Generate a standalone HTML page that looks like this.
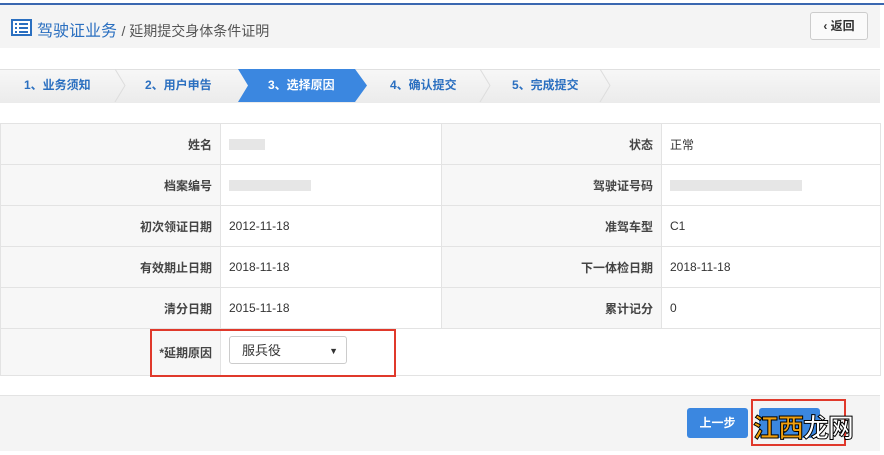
<!DOCTYPE html>
<html><head><meta charset="utf-8"><style>
body{margin:0;width:884px;height:455px;background:#fff;font-family:"Liberation Sans","Noto Sans CJK SC",sans-serif;font-size:12px;color:#333;position:relative;overflow:hidden}
.abs{position:absolute}
table{border-collapse:collapse;position:absolute;left:0;top:123px;width:881px}
td{border:1px solid #e3e3e3;height:40px;padding:0 8px}
td.l{background:#f7f7f7;text-align:right;width:203px;font-weight:bold;color:#444}
td.v{width:204px}
.blur{display:inline-block;height:11px;background:#e6e6e6;vertical-align:middle}
.step{position:absolute;top:69px;height:33px;line-height:33px;color:#2a6fc0;font-weight:bold;font-size:12px}
</style></head><body>
<div class="abs" style="left:0;top:3px;width:884px;height:2px;background:#3a67b0"></div>
<div class="abs" style="left:0;top:5px;width:880px;height:43px;background:#f4f4f4"></div>
<svg class="abs" style="left:11px;top:19px" width="21" height="17"><rect x="1" y="1" width="19" height="15" fill="#fff" stroke="#2a6fc0" stroke-width="2"/><rect x="4" y="4" width="2" height="2" fill="#2a6fc0"/><rect x="8" y="4" width="9" height="2" fill="#2a6fc0"/><rect x="4" y="8" width="2" height="2" fill="#2a6fc0"/><rect x="8" y="8" width="9" height="2" fill="#2a6fc0"/><rect x="4" y="12" width="2" height="2" fill="#2a6fc0"/><rect x="8" y="12" width="9" height="2" fill="#2a6fc0"/></svg>
<div class="abs" style="left:37px;top:17px;font-size:16px;color:#2a6fc0">驾驶证业务 <span style="color:#555;font-size:14px">/ 延期提交身体条件证明</span></div>
<div class="abs" style="left:810px;top:12px;width:56px;height:26px;border:1px solid #ccc;border-radius:3px;background:#fafafa;line-height:26px;text-align:center;font-size:12px;font-weight:bold">‹ 返回</div>
<div class="abs" style="left:0;top:69px;width:880px;height:33px;background:linear-gradient(#f7f7f7,#ebebeb);border-top:1px solid #e0e0e0"></div>
<svg class="abs" style="left:0;top:69px" width="880" height="33"><g fill="none" stroke="#ddd"><path d="M115 0 L125 16.5 L115 33"/><path d="M480 0 L490 16.5 L480 33"/><path d="M600 0 L610 16.5 L600 33"/></g><path d="M238 0 H355 L367 16.5 L355 33 H238 L248 16.5Z" fill="#3b87e0"/></svg>
<div class="step" style="left:24px">1、业务须知</div>
<div class="step" style="left:145px">2、用户申告</div>
<div class="step" style="left:268px;color:#fff">3、选择原因</div>
<div class="step" style="left:390px">4、确认提交</div>
<div class="step" style="left:512px">5、完成提交</div>
<table>
<tr><td class="l">姓名</td><td class="v"><span class="blur" style="width:36px"></span></td><td class="l">状态</td><td>正常</td></tr>
<tr><td class="l">档案编号</td><td class="v"><span class="blur" style="width:82px"></span></td><td class="l">驾驶证号码</td><td><span class="blur" style="width:132px"></span></td></tr>
<tr><td class="l">初次领证日期</td><td class="v">2012-11-18</td><td class="l">准驾车型</td><td>C1</td></tr>
<tr><td class="l">有效期止日期</td><td class="v">2018-11-18</td><td class="l">下一体检日期</td><td>2018-11-18</td></tr>
<tr><td class="l">清分日期</td><td class="v">2015-11-18</td><td class="l">累计记分</td><td>0</td></tr>
<tr><td class="l" style="height:46px">*延期原因</td><td colspan="3"></td></tr>
</table>
<div class="abs" style="left:229px;top:336px;width:118px;height:28px;border:1px solid #ccc;border-radius:3px;background:#fff;line-height:28px;padding-left:12px;box-sizing:border-box;font-size:13px">服兵役<span style="position:absolute;right:8px;font-size:9px">▼</span></div>
<div class="abs" style="left:150px;top:329px;width:246px;height:48px;border:2px solid #e0392b;box-sizing:border-box"></div>
<div class="abs" style="left:0;top:395px;width:880px;height:55px;background:#f4f4f4;border-top:1px solid #e3e3e3"></div>
<div class="abs" style="left:687px;top:408px;width:61px;height:30px;background:#3b87e0;border-radius:3px;color:#fff;text-align:center;line-height:30px;font-weight:bold">上一步</div>
<div class="abs" style="left:759px;top:408px;width:61px;height:30px;background:#3b87e0;border-radius:3px"></div>
<div class="abs" style="left:751px;top:399px;width:95px;height:47px;border:2px solid #e0392b;box-sizing:border-box"></div>
<div class="abs" style="left:753px;top:408px;font-size:26px;font-weight:bold;color:#f0a010;-webkit-text-stroke:1px #000;letter-spacing:-1px">江西<span style="color:#fff">龙网</span></div>
</body></html>
